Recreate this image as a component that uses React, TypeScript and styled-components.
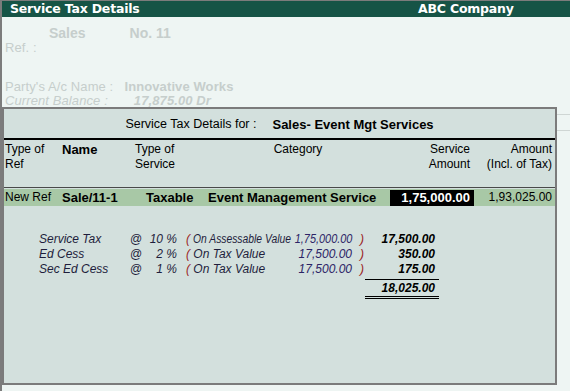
import React from 'react'
import styled, { createGlobalStyle } from 'styled-components'

const GlobalStyle = createGlobalStyle`
  html, body {
    margin: 0;
    padding: 0;
    background: #eef5f3;
  }
  body {
    font-family: 'Liberation Sans', Arial, sans-serif;
    font-size: 12px;
    color: #000;
  }
`

interface TaxLine {
  label: string
  rate: string
  basis: string
  narrow?: boolean
  base: string
  amount: string
}

const taxLines: TaxLine[] = [
  { label: 'Service Tax', rate: '10 %', basis: 'On Assessable Value', narrow: true, base: '1,75,000.00', amount: '17,500.00' },
  { label: 'Ed Cess', rate: '2 %', basis: 'On Tax Value', base: '17,500.00', amount: '350.00' },
  { label: 'Sec Ed Cess', rate: '1 %', basis: 'On Tax Value', base: '17,500.00', amount: '175.00' },
]

export default function App() {
  return (
    <Screen>
      <GlobalStyle />
      <TitleBar>
        <TitleText>Service Tax Details</TitleText>
        <TitleText>ABC Company</TitleText>
      </TitleBar>

      <Voucher>
        <VoucherHead>
          <Faint indent={44}>Sales</Faint>
          <Faint indent={44}>
            No. <b>11</b>
          </Faint>
        </VoucherHead>
        <FaintRow>Ref. :</FaintRow>
        <FaintRow gap={25}>
          Party&apos;s A/c Name :&nbsp;&nbsp; <b>Innovative Works</b>
        </FaintRow>
        <FaintRow italic>
          Current Balance :&nbsp;&nbsp;&nbsp;&nbsp;&nbsp;&nbsp;&nbsp;<b>17,875.00 Dr</b>
        </FaintRow>
        <Rule gap={6} />
        <Rule gap={15} />
      </Voucher>

      <Dialog>
        <DialogTitle>
          Service Tax Details for :<Gap /><b>Sales- Event Mgt Services</b>
        </DialogTitle>
        <ThickRule />
        <Columns header>
          <Cell>
            Type of
            <br />
            Ref
          </Cell>
          <Cell bold>Name</Cell>
          <Cell>
            Type of
            <br />
            Service
          </Cell>
          <Cell align='center' shift={22}>
            Category
          </Cell>
          <Cell align='right' pad={4}>
            Service
            <br />
            Amount
          </Cell>
          <Cell align='right' pad={1}>
            Amount
            <br />
            (Incl. of Tax)
          </Cell>
        </Columns>
        <ThinRule />
        <Columns selected>
          <Cell>New Ref</Cell>
          <Cell bold>Sale/11-1</Cell>
          <Cell bold shift={11}>
            Taxable
          </Cell>
          <Cell bold shift={24}>
            Event Management Service
          </Cell>
          <Cell bold align='right' pad={4} inverted>
            1,75,000.00
          </Cell>
          <Cell align='right' pad={1}>
            1,93,025.00
          </Cell>
        </Columns>

        <TaxTable>
          {taxLines.map((t, i) => (
            <React.Fragment key={t.label}>
              <TaxLabel>{t.label}</TaxLabel>
              <TaxAt>@</TaxAt>
              <TaxRate>{t.rate}</TaxRate>
              <TaxBasis>
                <Paren>(</Paren> <Squeezed scale={t.narrow ? 0.86 : 1}>{t.basis}</Squeezed>
              </TaxBasis>
              <TaxBase>
                <Squeezed scale={t.narrow ? 0.91 : 1} right>
                  {t.base}
                </Squeezed>
              </TaxBase>
              <TaxClose>
                <Paren>)</Paren>
              </TaxClose>
              <TaxAmount underline={i === taxLines.length - 1}>{t.amount}</TaxAmount>
            </React.Fragment>
          ))}
          <TotalAmount>18,025.00</TotalAmount>
        </TaxTable>
      </Dialog>
    </Screen>
  )
}

const Screen = styled.div`
  position: relative;
  width: 568px;
  height: 390px;
  border-left: 2px solid #7c7c7c;
  border-top: 1px solid #7c7c7c;
  overflow: hidden;
  background: #eef5f3;
`

const TitleBar = styled.div`
  display: grid;
  grid-template-columns: 408px 1fr;
  height: 16px;
  padding-left: 8px;
  background: #165446;
`

const TitleText = styled.div`
  color: #ffffff;
  font-family: 'DejaVu Sans', 'Liberation Sans', sans-serif;
  font-weight: bold;
  font-size: 12.5px;
  line-height: 16px;
  letter-spacing: -0.2px;
`

const Voucher = styled.div`
  display: flex;
  flex-direction: column;
  padding: 8px 0 0 3px;
  color: #c6cecc;
  font-size: 13px;
`

const VoucherHead = styled.div`
  display: flex;
  line-height: 16px;
  font-size: 14px;
`

const Faint = styled.span<{ indent: number }>`
  margin-left: ${(p) => p.indent}px;
  font-weight: 600;
  b {
    font-weight: bold;
  }
`

const FaintRow = styled.div<{ gap?: number; italic?: boolean }>`
  margin-top: ${(p) => p.gap ?? 0}px;
  line-height: 14px;
  font-style: ${(p) => (p.italic ? 'italic' : 'normal')};
  letter-spacing: 0.1px;
`

const Rule = styled.div<{ gap: number }>`
  margin-top: ${(p) => p.gap}px;
  height: 1px;
  background: #cfd6d4;
`

const Dialog = styled.div`
  position: absolute;
  left: 0;
  top: 106px;
  width: 555px;
  height: 278px;
  box-sizing: border-box;
  border: 2px solid #7b7b7b;
  background: #d3e0dd;
  display: flex;
  flex-direction: column;
`

const DialogTitle = styled.div`
  display: flex;
  justify-content: center;
  align-items: center;
  height: 29px;
  padding-top: 1px;
  box-sizing: border-box;
  font-size: 12.5px;
  b {
    font-size: 13px;
  }
`

const Gap = styled.span`
  display: inline-block;
  width: 16px;
`

const ThickRule = styled.div`
  height: 2px;
  background: #000;
`

const Columns = styled.div<{ header?: boolean; selected?: boolean }>`
  display: grid;
  grid-template-columns: 57px 73px 49px 206px 84px 1fr;
  padding: ${(p) => (p.header ? '2px 2px 0 1px' : '0 2px 0 1px')};
  margin-top: ${(p) => (p.selected ? '1px' : '0')};
  height: ${(p) => (p.header ? '30px' : '17px')};
  align-items: ${(p) => (p.header ? 'start' : 'center')};
  line-height: 15px;
  background: ${(p) => (p.selected ? '#a8c8a6' : 'transparent')};
`

const Cell = styled.div<{
  bold?: boolean
  align?: 'left' | 'center' | 'right'
  pad?: number
  shift?: number
  inverted?: boolean
}>`
  font-weight: ${(p) => (p.bold ? 'bold' : 'normal')};
  font-size: ${(p) => (p.bold ? '13px' : '12px')};
  text-align: ${(p) => p.align ?? 'left'};
  padding-right: ${(p) => p.pad ?? 0}px;
  padding-left: ${(p) => p.shift ?? 0}px;
  white-space: nowrap;
  background: ${(p) => (p.inverted ? '#000' : 'transparent')};
  color: ${(p) => (p.inverted ? '#fff' : '#000')};
  line-height: ${(p) => (p.inverted ? '16px' : 'inherit')};
`

const ThinRule = styled.div`
  margin-top: 15px;
  height: 1px;
  background: #4a4a4a;
`

const TaxTable = styled.div`
  display: grid;
  grid-template-columns: 91px 17px 35px 114px 57px 12px 74px;
  margin: 26px 0 0 35px;
  font-style: italic;
  line-height: 15px;
  color: #1e1e3c;
`

const TaxLabel = styled.div`
  white-space: nowrap;
`

const TaxAt = styled.div`
  font-style: normal;
`

const TaxRate = styled.div`
  text-align: right;
  padding-right: 5px;
  white-space: nowrap;
`

const TaxBasis = styled.div`
  padding-left: 4px;
  white-space: nowrap;
`

const Paren = styled.span`
  color: #9a1f1f;
`

const Squeezed = styled.span<{ scale: number; right?: boolean }>`
  display: inline-block;
  flex-shrink: 0;
  transform: scaleX(${(p) => p.scale});
  transform-origin: ${(p) => (p.right ? 'right' : 'left')} center;
`

const TaxBase = styled.div`
  display: flex;
  justify-content: flex-end;
  color: #2c2466;
  white-space: nowrap;
  padding-right: 1px;
`

const TaxClose = styled.div`
  padding-left: 7px;
`

const TaxAmount = styled.div<{ underline?: boolean }>`
  text-align: right;
  font-weight: bold;
  color: #000;
  padding-right: 4px;
  border-bottom: ${(p) => (p.underline ? '1px solid #000' : 'none')};
  height: ${(p) => (p.underline ? '17px' : '15px')};
`

const TotalAmount = styled.div`
  grid-column: 7;
  text-align: right;
  font-weight: bold;
  color: #000;
  padding-right: 4px;
  line-height: 16px;
  border-bottom: 3px double #000;
`
